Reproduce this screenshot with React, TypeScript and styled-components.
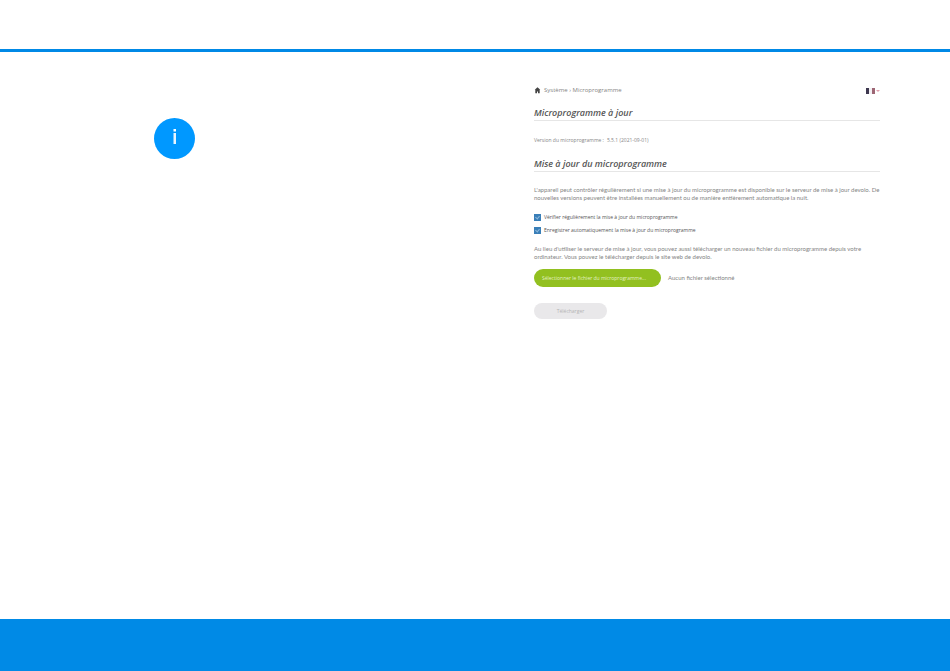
import React from "react";
import styled, { createGlobalStyle } from "styled-components";

const GlobalStyle = createGlobalStyle`
  * { box-sizing: border-box; }
  body { margin: 0; background: #fff; font-family: "Open Sans", "Noto Sans", sans-serif; }
`;

const Page = styled.div`
  min-height: 100vh;
  display: flex;
  flex-direction: column;
`;

const Header = styled.header`
  height: 52px;
  border-bottom: 3px solid #0089e6;
`;

const Main = styled.main`
  flex: 1;
  display: grid;
  grid-template-columns: minmax(0, 1fr) minmax(0, 1fr);
`;

const Aside = styled.aside`
  padding: 66px 0 0 154px;
`;

const InfoBadge = styled.svg`
  display: block;
  width: 41px;
  height: 41px;
`;

const Panel = styled.section`
  padding: 32px 70px 0 59px;
  color: #858585;
  font-family: Lato, "Open Sans", sans-serif;
  font-size: 6px;
  line-height: 8px;
`;

const TopRow = styled.div`
  display: flex;
  align-items: center;
  justify-content: space-between;
  height: 12px;
`;

const Crumbs = styled.nav`
  display: flex;
  align-items: center;
  gap: 3px;
  font-family: "Open Sans", sans-serif;
`;

const CrumbLink = styled.a`
  display: flex;
  color: #444;
`;

const Language = styled.button`
  display: flex;
  align-items: center;
  gap: 1px;
  margin-top: 2px;
  padding: 0;
  border: 0;
  background: none;
`;

const Title = styled.h2<{ $gap: number }>`
  margin: ${(p) => p.$gap}px 0 0;
  border-bottom: 1px solid #e6e6e6;
  color: #555;
  font-family: "Open Sans", sans-serif;
  font-size: 9px;
  font-style: italic;
  font-weight: 600;
  line-height: 14px;
`;

const Version = styled.p`
  display: flex;
  gap: 3px;
  margin: 15px 0 0;
  font-family: "Open Sans", sans-serif;
  font-size: 5px;
`;

const Paragraph = styled.p<{ $gap: number }>`
  margin: ${(p) => p.$gap}px 0 0;
`;

const Options = styled.div`
  display: flex;
  flex-direction: column;
  gap: 5px;
  margin-top: 11px;
`;

const Option = styled.label`
  display: flex;
  align-items: center;
  gap: 3px;
  color: #555;
  font-family: "Open Sans", sans-serif;
  font-size: 5px;
`;

const Checkbox = styled.input`
  appearance: none;
  width: 7px;
  height: 7px;
  margin: 0;
  background: #3a7fb8;
  display: grid;
  place-items: center;

  &:checked::before {
    content: "";
    width: 2px;
    height: 3px;
    border: solid #8db8dc;
    border-width: 0 1px 1px 0;
    transform: rotate(40deg);
  }
`;

const FileRow = styled.div`
  display: flex;
  align-items: center;
  gap: 7px;
  margin-top: 8px;
`;

const Button = styled.button<{ $primary?: boolean }>`
  width: ${(p) => (p.$primary ? 127 : 73)}px;
  height: ${(p) => (p.$primary ? 18 : 16)}px;
  padding: 0 8px;
  border: 0;
  border-radius: 9px;
  background: ${(p) => (p.$primary ? "#92c020" : "#e9e8ea")};
  color: ${(p) => (p.$primary ? "#e4f1c4" : "#b4b4b4")};
  font-family: "Open Sans", sans-serif;
  font-size: 5px;
  text-align: ${(p) => (p.$primary ? "left" : "center")};
  white-space: nowrap;
`;

const Submit = styled.div`
  display: flex;
  margin-top: 16px;
`;

const Footer = styled.footer`
  height: 52px;
  background: #008ae6;
`;

export default function App() {
  return (
    <Page>
      <GlobalStyle />
      <Header />
      <Main>
        <Aside>
          <InfoBadge viewBox="0 0 41 41" role="img" aria-label="Information">
            <circle cx="20.5" cy="20.5" r="20.5" fill="#0098ff" />
            <rect x="19.5" y="11" width="2.5" height="2.5" fill="#fff" />
            <rect x="19.5" y="15" width="2.5" height="11" fill="#e8f5ff" />
          </InfoBadge>
        </Aside>
        <Panel>
          <TopRow>
            <Crumbs>
              <CrumbLink href="#" aria-label="Accueil">
                <svg width="7" height="7" viewBox="0 0 7 7" fill="currentColor">
                  <path d="M3.5 0.2 6.3 2.8H5.7V6.2H4V4.6H3V6.2H1.3V2.8H0.7Z" />
                </svg>
              </CrumbLink>
              <span>Système › Microprogramme</span>
            </Crumbs>
            <Language type="button" aria-label="Français">
              <svg width="9" height="6" viewBox="0 0 9 6">
                <rect width="3" height="6" fill="#3e3850" />
                <rect x="3" width="3" height="6" fill="#f3f0f4" />
                <rect x="6" width="3" height="6" fill="#9d6674" />
              </svg>
              <svg width="4" height="2" viewBox="0 0 4 2">
                <path d="M0 0H4L2 2Z" fill="#e0a0ae" />
              </svg>
            </Language>
          </TopRow>
          <Title $gap={10}>Microprogramme à jour</Title>
          <Version>
            <span>Version du microprogramme :</span>
            <span>5.5.1 (2021-09-01)</span>
          </Version>
          <Title $gap={13}>Mise à jour du microprogramme</Title>
          <Paragraph $gap={14}>
            L'appareil peut contrôler régulièrement si une mise à jour du microprogramme est disponible sur le serveur de mise à jour devolo. De
            <br />
            nouvelles versions peuvent être installées manuellement ou de manière entièrement automatique la nuit.
          </Paragraph>
          <Options>
            <Option>
              <Checkbox type="checkbox" defaultChecked />
              Vérifier régulièrement la mise à jour du microprogramme
            </Option>
            <Option>
              <Checkbox type="checkbox" defaultChecked />
              Enregistrer automatiquement la mise à jour du microprogramme
            </Option>
          </Options>
          <Paragraph $gap={11}>
            Au lieu d'utiliser le serveur de mise à jour, vous pouvez aussi télécharger un nouveau fichier du microprogramme depuis votre
            <br />
            ordinateur. Vous pouvez le télécharger depuis le site web de devolo.
          </Paragraph>
          <FileRow>
            <Button type="button" $primary>Sélectionner le fichier du microprogramme...</Button>
            <span>Aucun fichier sélectionné</span>
          </FileRow>
          <Submit>
            <Button type="button" disabled>Télécharger</Button>
          </Submit>
        </Panel>
      </Main>
      <Footer />
    </Page>
  );
}
